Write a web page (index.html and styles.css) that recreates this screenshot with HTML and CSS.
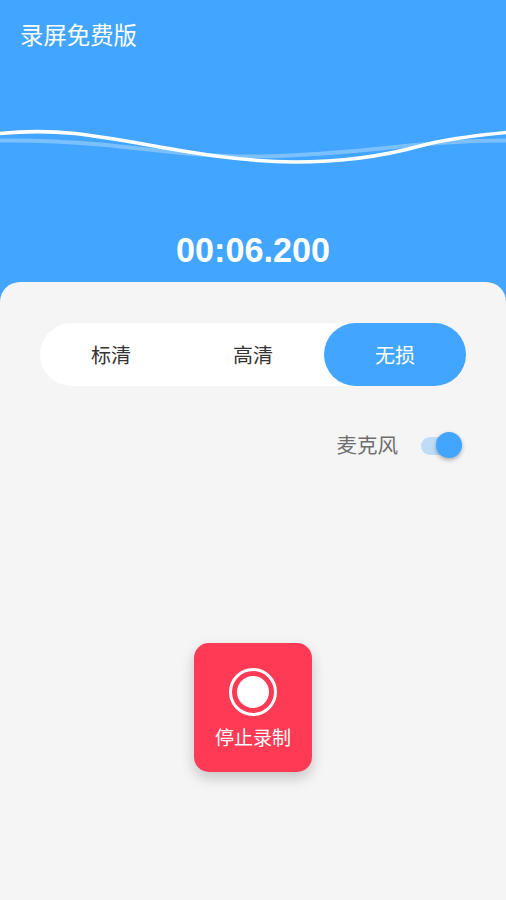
FILE: index.html
```html
<!DOCTYPE html>
<html lang="zh">
<head>
<meta charset="utf-8">
<title>录屏免费版</title>
<link rel="stylesheet" href="styles.css">
</head>
<body>
<div class="app">
  <header class="hero">
    <h1 class="title">录屏免费版</h1>
    <svg class="wave" viewBox="0 0 506 50" width="506" height="50" aria-hidden="true">
      <path class="wave-back" d="M0 20.500C30 20 60 21 100 24.500C150 29 190 36 240 36.500C290 37 340 33 400 26.500C440 22.500 480 20.500 506 20.500"/>
      <path class="wave-front" d="M0 13.500C20 11.500 45 10.500 75 13.500C120 18.500 170 30 220 36.500C250 40.500 270 42 295 42C340 42 380 37 420 26C450 18 480 15 506 12.500"/>
    </svg>
    <div class="timer">00:06.200</div>
  </header>
  <main class="panel">
    <div class="segments">
      <div class="segment">标清</div>
      <div class="segment">高清</div>
      <div class="segment active">无损</div>
    </div>
    <div class="mic-row">
      <span class="mic-label">麦克风</span>
      <span class="switch"><span class="switch-thumb"></span></span>
    </div>
    <button class="stop" type="button">
      <span class="stop-icon"><span class="stop-dot"></span></span>
      <span class="stop-label">停止录制</span>
    </button>
  </main>
</div>
</body>
</html>
```
FILE: styles.css
```css
* { box-sizing: border-box; }
html, body { margin: 0; padding: 0; }
body {
  width: 506px;
  height: 900px;
  overflow: hidden;
  background: #42a5ff;
  font-family: "Noto Sans CJK SC", "Liberation Sans", sans-serif;
}
.app { display: flex; flex-direction: column; height: 900px; }
.hero {
  height: 282px;
  flex: none;
  display: flex;
  flex-direction: column;
  color: #fff;
}
.title {
  margin: 0;
  padding: 17px 0 0 20px;
  height: 120px;
  font-size: 23.400px;
  line-height: 35px;
  font-weight: 400;
}
.wave { display: block; flex: none; }
.wave path { fill: none; stroke: #fff; }
.wave-front { stroke-width: 3.500; }
.wave .wave-back { stroke-width: 4; stroke: rgba(255, 255, 255, .3); }
.timer {
  margin-top: 57px;
  text-align: center;
  font-family: "Liberation Sans", Arial, sans-serif;
  font-size: 34.200px;
  line-height: 46px;
  font-weight: 700;
}
.panel {
  flex: 1;
  display: flex;
  flex-direction: column;
  background: #f5f5f5;
  border-radius: 20px 20px 0 0;
  padding: 41px 40px 0;
}
.segments {
  display: flex;
  height: 63px;
  background: #fff;
  border-radius: 31.500px;
}
.segment {
  flex: 1;
  display: flex;
  align-items: center;
  justify-content: center;
  border-radius: 31.500px;
  font-size: 20px;
  color: #333;
}
.segment.active { background: #42a5ff; color: #fff; }
.mic-row {
  display: flex;
  align-items: center;
  justify-content: flex-end;
  margin-top: 43px;
  height: 30px;
  padding-right: 4px;
}
.mic-label { font-size: 20.500px; color: #6e6e6e; margin-right: 23px; }
.switch {
  position: relative;
  display: block;
  width: 41px;
  height: 18px;
  margin-top: 3px;
  border-radius: 9px;
  background: #bedcf8;
}
.switch-thumb {
  position: absolute;
  top: -5px;
  right: 0;
  width: 26px;
  height: 26px;
  border-radius: 50%;
  background: #42a5ff;
  box-shadow: 0 2px 4px rgba(0, 0, 0, .3);
}
.stop {
  align-self: center;
  display: flex;
  flex-direction: column;
  align-items: center;
  width: 118px;
  height: 129px;
  margin-top: 184px;
  padding: 25px 0 0;
  border: 0;
  border-radius: 15px;
  background: #ff3a55;
  color: #fff;
  font-family: inherit;
  box-shadow: 0 6px 14px rgba(0, 0, 0, .2);
}
.stop-icon {
  display: flex;
  align-items: center;
  justify-content: center;
  width: 48px;
  height: 48px;
  border: 3px solid #fff;
  border-radius: 50%;
}
.stop-dot { width: 32px; height: 32px; border-radius: 50%; background: #fff; }
.stop-label { margin-top: 7px; font-size: 19px; line-height: 28px; }
```
